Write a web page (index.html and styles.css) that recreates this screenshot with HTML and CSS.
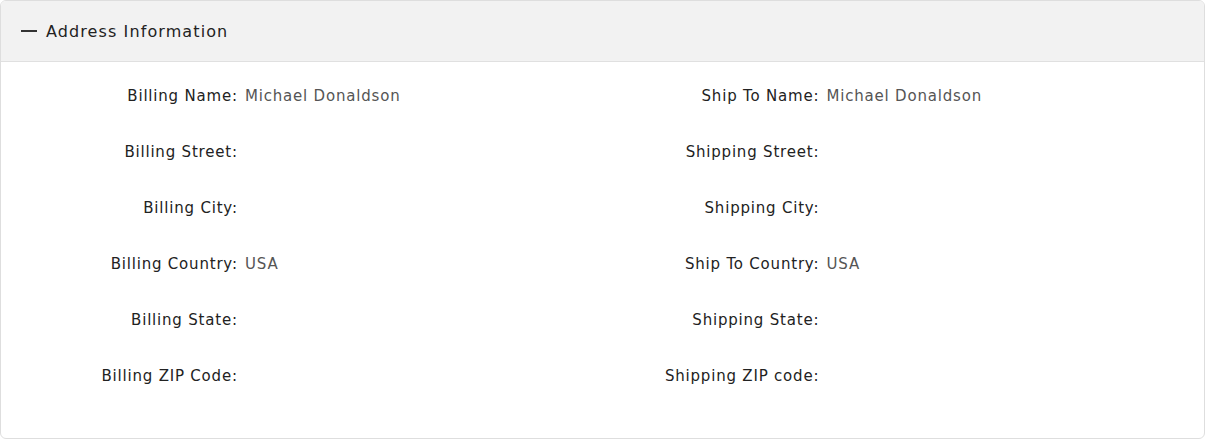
FILE: index.html
```html
<!DOCTYPE html>
<html lang="en">
<head>
    <meta charset="UTF-8">
    <title>Address Information</title>
    <link rel="stylesheet" href="styles.css">
</head>
<body>
    <div class="panel">
        <div class="panel-header">
            <span class="toggle"></span>
            <span class="panel-title">Address Information</span>
        </div>
        <div class="panel-body">
            <div class="column">
                <div class="field"><span class="label">Billing Name:</span><span class="value">Michael Donaldson</span></div>
                <div class="field"><span class="label">Billing Street:</span><span class="value"></span></div>
                <div class="field"><span class="label">Billing City:</span><span class="value"></span></div>
                <div class="field"><span class="label">Billing Country:</span><span class="value">USA</span></div>
                <div class="field"><span class="label">Billing State:</span><span class="value"></span></div>
                <div class="field"><span class="label">Billing ZIP Code:</span><span class="value"></span></div>
            </div>
            <div class="column">
                <div class="field"><span class="label">Ship To Name:</span><span class="value">Michael Donaldson</span></div>
                <div class="field"><span class="label">Shipping Street:</span><span class="value"></span></div>
                <div class="field"><span class="label">Shipping City:</span><span class="value"></span></div>
                <div class="field"><span class="label">Ship To Country:</span><span class="value">USA</span></div>
                <div class="field"><span class="label">Shipping State:</span><span class="value"></span></div>
                <div class="field"><span class="label">Shipping ZIP code:</span><span class="value"></span></div>
            </div>
        </div>
    </div>
</body>
</html>
```

FILE: styles.css
```css
body {
    margin: 0;
    font-family: 'DejaVu Sans', 'Open Sans', sans-serif;
    background: #fff;
}
.panel {
    width: 1205px;
    height: 439px;
    box-sizing: border-box;
    border: 1px solid #dedede;
    border-radius: 6px;
    overflow: hidden;
    background: #fff;
}
.panel-header {
    height: 60px;
    display: flex;
    align-items: center;
    padding-left: 20px;
    background: #f2f2f2;
    border-bottom: 1px solid #e0e0e0;
}
.toggle {
    width: 16px;
    height: 2px;
    background: #333;
    margin-right: 9px;
}
.panel-title {
    font-size: 16px;
    letter-spacing: 1.1px;
    color: #222;
}
.panel-body {
    display: grid;
    grid-template-columns: 1fr 1fr;
    padding: 6px 20px 0 20px;
}
.field {
    display: grid;
    grid-template-columns: 216px 1fr;
    column-gap: 8px;
    height: 56px;
    align-items: center;
    font-size: 15px;
    letter-spacing: 0.8px;
}
.label {
    text-align: right;
    color: #222;
    margin-right: -0.8px;
}
.value {
    color: #555;
}
```
